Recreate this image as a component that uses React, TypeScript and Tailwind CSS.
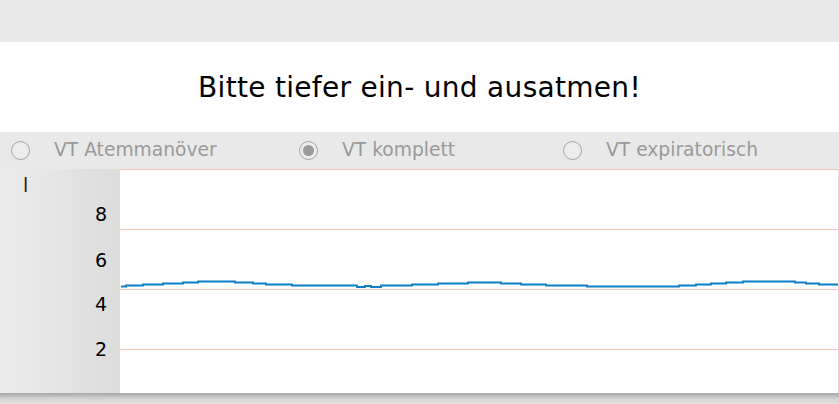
const font = { fontFamily: '"DejaVu Sans", Verdana, sans-serif' };

// step trace of the volume curve, [xStart, xEnd, y] in page coords
const steps: [number, number, number][] = [
  [121, 126, 286.5], [126, 143, 285.5], [143, 163, 284.5], [163, 183, 283.5],
  [183, 198, 282.5], [198, 235, 281.5], [235, 253, 282.5], [253, 266, 283.5],
  [266, 292, 284.5], [292, 357, 285.5], [357, 365, 287], [365, 371, 286],
  [371, 381, 287], [381, 412, 285.5], [412, 438, 284.5], [438, 468, 283.5],
  [468, 501, 282.5], [501, 521, 283.5], [521, 546, 284.5], [546, 587, 285.5],
  [587, 679, 286.5], [679, 696, 285.5], [696, 711, 284.5], [711, 726, 283.5],
  [726, 743, 282.5], [743, 795, 281.5], [795, 806, 282.5], [806, 819, 283.5],
  [819, 838, 284.5],
];

function tracePath() {
  let d = "";
  steps.forEach(([x0, x1, y], i) => {
    const ax = x0 - 120;
    const bx = x1 - 120;
    const yy = y - 169;
    d += i === 0 ? `M${ax} ${yy}` : ` L${ax} ${yy}`;
    d += ` L${bx} ${yy}`;
  });
  return d;
}

function Radio({ checked }: { checked?: boolean }) {
  return (
    <span className="flex h-[19px] w-[19px] shrink-0 items-center justify-center rounded-full border border-[#a4a4a4] bg-[#ececec]">
      {checked && <span className="h-[11px] w-[11px] rounded-full bg-[#9a9a9a]"></span>}
    </span>
  );
}

export default function App() {
  return (
    <div className="w-[839px] h-[404px] bg-[#e9e9e9] overflow-hidden" style={font}>
      <div className="h-[42px] bg-[#e9e9e9]"></div>

      {/* Prompt */}
      <div className="h-[90px] bg-white flex items-center justify-center">
        <span className="text-[28px] text-black tracking-[0.3px] pt-[1px]">Bitte tiefer ein- und ausatmen!</span>
      </div>

      {/* Mode selection */}
      <div className="h-[37px] bg-[#e9e9e9] flex items-center text-[18.7px] text-[#9a9a9a]">
        <div className="w-[299px] pl-[11px] flex items-center gap-[24px]">
          <Radio />
          <span>VT Atemmanöver</span>
        </div>
        <div className="w-[264px] flex items-center gap-[24px]">
          <Radio checked />
          <span>VT komplett</span>
        </div>
        <div className="flex items-center gap-[24px]">
          <Radio />
          <span>VT expiratorisch</span>
        </div>
      </div>

      {/* Chart */}
      <div className="h-[224px] flex">
        <div className="w-[120px] relative bg-gradient-to-r from-[#ececec] to-[#dcdcdc] text-[19px] leading-[22px] text-black">
          <span className="absolute left-[23px] top-[5px] text-[#3a1d08]">l</span>
          <span className="absolute right-[13px] top-[34px]">8</span>
          <span className="absolute right-[13px] top-[80px]">6</span>
          <span className="absolute right-[13px] top-[124px]">4</span>
          <span className="absolute right-[13px] top-[169px]">2</span>
        </div>
        <div className="flex-1 bg-white border-t border-[#f5c3b3] border-r border-r-[#dcdcdc]">
          <svg width="718" height="223" className="block">
            <line x1="0" y1="59.5" x2="718" y2="59.5" stroke="#f5c3b3" strokeWidth="1" />
            <line x1="0" y1="119.5" x2="718" y2="119.5" stroke="#f5c3b3" strokeWidth="1" />
            <line x1="0" y1="179.5" x2="718" y2="179.5" stroke="#f5c3b3" strokeWidth="1" />
            <path d={tracePath()} fill="none" stroke="#0a7fc2" strokeWidth="1.8" transform="translate(0,-1)" />
          </svg>
        </div>
      </div>

      {/* Drop shadow under the panel */}
      <div className="h-[11px] bg-gradient-to-b from-[#a6a6a6] via-[#d2d2d2] to-[#e2e2e2]"></div>
    </div>
  );
}
